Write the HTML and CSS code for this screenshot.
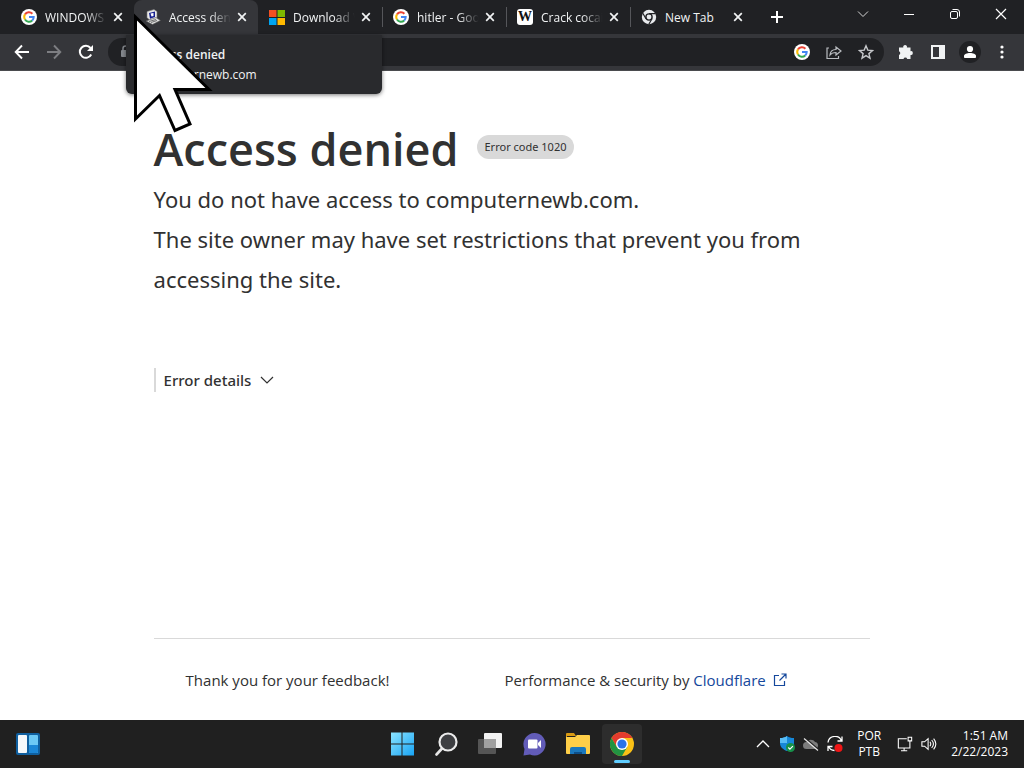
FILE: index.html
```html
<!DOCTYPE html>
<html lang="en">
<head>
<meta charset="utf-8">
<title>Access denied</title>
<link rel="stylesheet" href="styles.css">
</head>
<body>
<svg class="defs" width="0" height="0" aria-hidden="true">
  <symbol id="google" viewBox="0 0 16 16">
    <circle cx="8" cy="8" r="8" fill="#fff"/>
    <g fill="none" stroke-width="2">
      <path d="M4 5.400A4.700 4.700 0 0 1 11.400 4.700" stroke="#ea4335"/>
      <path d="M4 10.500A4.700 4.700 0 0 1 4 5.400" stroke="#fbbc05"/>
      <path d="M11.200 11.500A4.700 4.700 0 0 1 4 10.500" stroke="#34a853"/>
      <path d="M8 8H12.700A4.700 4.700 0 0 1 11.200 11.500" stroke="#4285f4"/>
    </g>
  </symbol>
  <symbol id="close" viewBox="0 0 16 16"><path d="M4.200 4.200l7.600 7.600M11.800 4.200l-7.600 7.600" stroke="#f1f3f4" stroke-width="1.700"/></symbol>
</svg>

<header class="browser">
  <div class="strip">
    <div class="tab">
      <svg class="icon"><use href="#google"/></svg>
      <span class="name">WINDOWS</span>
      <button class="close" aria-label="Close tab"><svg class="icon"><use href="#close"/></svg></button>
    </div>
    <div class="tab active">
      <svg class="icon" viewBox="0 0 16 16"><path d="M2 2.500L9 .5l3 2v6.500l-7 2.500-3-3z" fill="#e8e8e8" stroke="#777" stroke-width=".6"/><path d="M4 4l6-1.500v5.600L5 9.700z" fill="#172090"/><path d="M5.500 4.500l3-.5v3l-2 .5z" fill="#fff"/><path d="M1 12l10-3.500 4.500 3-8 4z" fill="#ddd" stroke="#555" stroke-width=".6"/><path d="M4 12.500l7-2M6 13.500l6-2" stroke="#444" stroke-width=".7"/></svg>
      <span class="name">Access den</span>
      <button class="close" aria-label="Close tab"><svg class="icon"><use href="#close"/></svg></button>
    </div>
    <div class="tab">
      <svg class="icon" viewBox="0 0 16 16"><path d="M0 1h7.500v7H0z" fill="#f25022"/><path d="M8.500 1H16v7H8.500z" fill="#7fba00"/><path d="M0 9h7.500v7H0z" fill="#00a4ef"/><path d="M8.500 9H16v7H8.500z" fill="#ffb900"/></svg>
      <span class="name">Download W</span>
      <button class="close" aria-label="Close tab"><svg class="icon"><use href="#close"/></svg></button>
    </div>
    <div class="tab lined">
      <svg class="icon"><use href="#google"/></svg>
      <span class="name">hitler - Goo</span>
      <button class="close" aria-label="Close tab"><svg class="icon"><use href="#close"/></svg></button>
    </div>
    <div class="tab lined">
      <span class="icon wiki">W</span>
      <span class="name">Crack cocai</span>
      <button class="close" aria-label="Close tab"><svg class="icon"><use href="#close"/></svg></button>
    </div>
    <div class="tab lined">
      <svg class="icon" viewBox="0 0 16 16"><circle cx="8" cy="8" r="7.200" fill="#e8eaed"/><circle cx="8" cy="8" r="3.800" fill="#202124"/><circle cx="8" cy="8" r="2.400" fill="#e8eaed"/><path d="M8 4.600h6.500M5 9.800L1.800 4.200M11 9.800L7.800 15.300" stroke="#202124" stroke-width="1.200"/></svg>
      <span class="name whole">New Tab</span>
      <button class="close" aria-label="Close tab"><svg class="icon"><use href="#close"/></svg></button>
    </div>
    <button class="plus" aria-label="New tab"><svg class="icon" viewBox="0 0 16 16"><path d="M8 2v12M2 8h12" stroke="#fff" stroke-width="2"/></svg></button>
    <div class="window">
      <button aria-label="Search tabs"><svg class="icon" viewBox="0 0 16 16" fill="none" stroke="#d5d5d5"><path d="M3 5.500l5 5 5-5"/></svg></button>
      <button aria-label="Minimize"><svg class="icon" viewBox="0 0 16 16"><path d="M3 8.500h10" stroke="#fff"/></svg></button>
      <button aria-label="Restore"><svg class="icon" viewBox="0 0 16 16" fill="none" stroke="#fff"><rect x="3.500" y="5.500" width="7" height="7" rx="1.500"/><path d="M5.500 3.500h4.500a2.500 2.500 0 0 1 2.500 2.500v4.500"/></svg></button>
      <button aria-label="Close"><svg class="icon" viewBox="0 0 16 16"><path d="M3 3l10 10M13 3L3 13" stroke="#fff" stroke-width="1.200"/></svg></button>
    </div>
  </div>

  <div class="toolbar">
    <button aria-label="Back"><svg class="icon" viewBox="0 0 16 16" fill="none" stroke="#fff" stroke-width="1.900"><path d="M15 8H2M8 1.500L1.700 8 8 14.500"/></svg></button>
    <button aria-label="Forward"><svg class="icon" viewBox="0 0 16 16" fill="none" stroke="#7d7e82" stroke-width="1.900"><path d="M1 8h13M8 1.500L14.300 8 8 14.500"/></svg></button>
    <button aria-label="Reload"><svg class="icon" viewBox="0 0 16 16" fill="none" stroke="#fff" stroke-width="2"><path d="M13.200 10.500A6 6 0 1 1 12.500 4"/><path d="M15 1v6H9z" fill="#fff" stroke="none"/></svg></button>
    <div class="address">
      <svg class="icon" viewBox="0 0 16 16"><rect x="5" y="6" width="9" height="7" rx="1" fill="#85898e"/><path d="M7 7V4.500a2.500 2.500 0 0 1 5 0V7" fill="none" stroke="#85898e" stroke-width="1.500"/></svg>
      <input type="text" aria-label="Address">
      <button aria-label="Google"><svg class="icon"><use href="#google"/></svg></button>
      <button aria-label="Share"><svg class="icon" viewBox="0 0 16 16" fill="none" stroke="#b9bcc0" stroke-width="1.200"><path d="M3 4H1v10.500h11.500V12"/><path d="M4 11c.3-4 2.500-5.500 6-5.500V3l5 4-5 4V8.500C7 8.500 5.500 9 4 11z"/></svg></button>
      <button aria-label="Bookmark"><svg class="icon" viewBox="0 0 16 16" fill="none" stroke="#c6c8cb" stroke-width="1.400"><path d="M8 1.800l1.800 4.300 4.700.4-3.600 3.100 1.100 4.600L8 11.700l-4 2.500 1.100-4.600-3.600-3.100 4.700-.4z"/></svg></button>
    </div>
    <div class="tools">
      <button aria-label="Extensions"><svg class="icon" viewBox="0 0 16 16" fill="#f1f3f4"><path d="M2 3.500h3.300a1.900 1.900 0 1 1 3.600 0h3.600v3.700a1.900 1.900 0 1 1 0 3.700v4H9.200a1.900 1.900 0 0 0-3.700 0H1v-4a1.900 1.900 0 0 0 0-3.600V3.500z"/></svg></button>
      <button aria-label="Side panel"><svg class="icon" viewBox="0 0 16 16"><path fill-rule="evenodd" d="M1 1h14v14H1zM3 3v10h6V3z" fill="#f1f3f4"/></svg></button>
      <button class="profile" aria-label="Profile"><svg class="icon" viewBox="0 0 16 16" fill="#fff"><circle cx="8" cy="5" r="3.100"/><path d="M2 14v-2c0-2 3-3 6-3s6 1 6 3v2z"/></svg></button>
      <button aria-label="Menu"><svg class="icon" viewBox="0 0 16 16" fill="#fff"><circle cx="8" cy="3" r="1.600"/><circle cx="8" cy="8" r="1.600"/><circle cx="8" cy="13" r="1.600"/></svg></button>
    </div>
  </div>

  <div class="tooltip" role="tooltip"><b>Access denied</b><span>computernewb.com</span></div>
  <svg class="pointer" viewBox="0 0 80 122" aria-hidden="true"><path d="M2.500 5V107L26.500 83.500 42 118.500 57 112 42 77.500H76z" fill="#fff" stroke="#000" stroke-width="3"/></svg>
</header>

<main class="page">
  <div class="heading"><h1>Access denied</h1><span class="badge">Error code 1020</span></div>
  <p class="lead">You do not have access to computernewb.com.<br>The site owner may have set restrictions that prevent you from accessing the site.</p>
  <button class="details">Error details <svg class="icon" viewBox="0 0 16 16" fill="none" stroke="#313131" stroke-width="1.200"><path d="M2 5l6 6 6-6"/></svg></button>
  <footer class="foot">
    <span>Thank you for your feedback!</span>
    <span>Performance &amp; security by <a href="#">Cloudflare <svg class="icon" viewBox="0 0 16 16" fill="none" stroke="#15489c" stroke-width="1.200"><path d="M7 3.500H2.500v10h10V9M9.500 2H14v4.500M14 2L7.500 8.500"/></svg></a></span>
  </footer>
</main>

<nav class="taskbar">
  <button class="widgets" aria-label="Widgets"><svg viewBox="0 0 24 24"><rect width="24" height="22" y="1" rx="2" fill="#0f5f9f"/><rect x="2" y="3" width="9" height="18" rx="1" fill="#f4f8fb"/><rect x="13" y="3" width="9" height="18" rx="1" fill="#6cc8f5"/><path d="M13 13h9v7a1 1 0 0 1-1 1h-7a1 1 0 0 1-1-1z" fill="#1b86d6"/></svg></button>
  <div class="apps">
    <button aria-label="Start"><svg viewBox="0 0 24 24"><defs><linearGradient id="win" x2="1" y2="1"><stop stop-color="#8be4ff"/><stop offset="1" stop-color="#18a4f5"/></linearGradient></defs><path d="M1 0.500h10.500v11H1zM12.500.5H24v11H12.500zM1 12.500h10.500v11H1zM12.500 12.500H24v11H12.500z" fill="url(#win)"/></svg></button>
    <button aria-label="Search"><svg viewBox="0 0 24 24"><path d="M8.500 16L2.500 22.500" stroke="#e6e6e6" stroke-width="2.600" stroke-linecap="round"/><circle cx="14" cy="10" r="8.500" fill="#3e3f42" stroke="#ececec" stroke-width="2.200"/></svg></button>
    <button aria-label="Task view"><svg viewBox="0 0 24 24"><rect x="6" y="1" width="18" height="15" rx="1" fill="#f2f2f2"/><rect x="0" y="7" width="18" height="15" rx="1" fill="#555"/><path d="M6 7h12v9H6z" fill="#a0a0a0"/></svg></button>
    <button aria-label="Chat"><svg viewBox="0 0 24 24"><path d="M12.500 1A11.200 11.200 0 1 1 8 22.500L1.500 23.500 2.500 17A11.200 11.200 0 0 1 12.500 1z" fill="#625cb8"/><rect x="6" y="7.500" width="9.500" height="9" rx="1" fill="#fff"/><path d="M16 11l3-3v8l-3-3z" fill="#fff"/></svg></button>
    <button aria-label="File Explorer"><svg viewBox="0 0 24 24"><path d="M0 2a1 1 0 0 1 1-1h7l2 3H1v3H0z" fill="#d99a13"/><path d="M0 5h9l2-2h12a1 1 0 0 1 1 1v17a1 1 0 0 1-1 1H1a1 1 0 0 1-1-1z" fill="#ffcf48"/><path d="M4 22v-5a2 2 0 0 1 2-2h12a2 2 0 0 1 2 2v5z" fill="#1b78bd"/><path d="M8 22v-2h8v2z" fill="#0d4f8a"/></svg></button>
    <button class="running" aria-label="Chrome"><svg viewBox="0 0 24 24"><circle cx="12" cy="12" r="12" fill="#fbc116"/><path d="M1.600 6A12 12 0 0 1 22.400 6H12L6.800 15z" fill="#e33b2e"/><path d="M1.600 6A12 12 0 0 0 12 24l5.200-9H6.800z" fill="#229342"/><circle cx="12" cy="12" r="6" fill="#fff"/><circle cx="12" cy="12" r="4.600" fill="#2a72e8"/></svg></button>
  </div>
  <div class="tray">
    <button aria-label="Hidden icons"><svg class="icon" viewBox="0 0 16 16" fill="none" stroke="#fff" stroke-width="1.300"><path d="M2 11l6-6 6 6"/></svg></button>
    <button aria-label="Security"><svg class="icon" viewBox="0 0 16 16"><path d="M8 0c2 1.500 4 2 7 2v5c0 4-3 6.500-7 8-4-1.500-7-4-7-8V2c3 0 5-.5 7-2z" fill="#1687d8"/><path d="M8 0v7H1V2c3 0 5-.5 7-2z" fill="#58bdf5"/><circle cx="11.500" cy="11.500" r="4.500" fill="#17914a"/><path d="M9.300 11.500l1.600 1.600 3-3" fill="none" stroke="#fff" stroke-width="1.200"/></svg></button>
    <button aria-label="OneDrive"><svg class="icon" viewBox="0 0 16 16"><path d="M3.500 13a3.500 3.500 0 0 1 0-7 5 5 0 0 1 8.500 0 3.600 3.600 0 0 1 .5 7z" fill="#7c7c7c"/><path d="M1.500 1.500l14 12" stroke="#202020" stroke-width="1.500"/><path d="M1 2.500l14 12" stroke="#e5e5e5" stroke-width="1.200"/></svg></button>
    <button aria-label="Update"><svg class="icon" viewBox="0 0 16 16" fill="none" stroke="#fff" stroke-width="1.300"><path d="M1 6.500A7 7 0 0 1 14.500 5M15 .5V5h-4.500M1 15v-4.500h4.500M1.500 10.500a7 7 0 0 0 6 4"/><circle cx="11.500" cy="12" r="4" fill="#f01515" stroke="none"/></svg></button>
    <span class="lang">POR<br>PTB</span>
    <button aria-label="Network"><svg viewBox="0 0 18 18" fill="none" stroke="#fff" stroke-width="1.200"><path d="M11 3H1.500v10.500h13V9M8 13.500V16.500M4.500 16.500h7"/><path d="M12.500 1.500h4v4h-4zM14.500 5.500V9"/></svg></button>
    <button aria-label="Volume"><svg viewBox="0 0 18 18" fill="none" stroke="#fff" stroke-width="1.200"><path d="M1 6.500h3l4-3.500v12l-4-3.500H1zM10 6.500q2 2.500 0 5M12 4.500q4 4.500 0 9M14.200 3q5 6 0 12"/></svg></button>
    <span class="clock">1:51 AM<br>2/22/2023</span>
  </div>
</nav>
</body>
</html>
```

FILE: styles.css
```css
* { box-sizing: border-box; }
body {
  margin: 0;
  min-height: 100vh;
  display: flex;
  flex-direction: column;
  background: #fff;
  color: #313131;
  font-family: "Segoe UI", "Open Sans", "Noto Sans", sans-serif;
}
button {
  border: 0;
  padding: 0;
  background: none;
  color: inherit;
  font: inherit;
  display: flex;
  align-items: center;
  justify-content: center;
}
.defs { position: absolute; }
.icon { width: 16px; height: 16px; flex: none; }

.browser { position: relative; background: #202124; color: #f1f3f4; font-size: 12px; }
.strip { display: flex; height: 34px; padding-left: 10px; }
.tab {
  display: flex;
  align-items: center;
  gap: 8px;
  flex: 0 1 124px;
  min-width: 0;
  padding: 0 8px 0 10px;
  border-left: 1px solid transparent;
}
.tab.active { background: #35363a; border-radius: 8px 8px 0 0; }
.tab.lined { border-image: linear-gradient(transparent 8px, #55565a 8px, #55565a 26px, transparent 26px) 1; }
.name {
  flex: 1;
  min-width: 0;
  margin-right: -6px;
  overflow: hidden;
  white-space: nowrap;
  mask-image: linear-gradient(90deg, #000 65%, transparent 98%);
}
.name.whole { mask-image: none; }
.wiki {
  background: #fff;
  border-radius: 3px;
  color: #111;
  font: bold 14px/16px "Liberation Serif", serif;
  text-align: center;
}
.plus { width: 46px; }
.window { display: flex; margin-left: auto; height: 28px; }
.window button { width: 46px; }

.toolbar {
  display: flex;
  align-items: center;
  gap: 16px;
  height: 37px;
  padding: 0 14px;
  background: #35363a;
  border-bottom: 1px solid #4a4b4e;
}
.address {
  flex: 1;
  display: flex;
  align-items: center;
  gap: 16px;
  height: 28px;
  padding: 0 10px 0 8px;
  margin-left: -2px;
  border-radius: 14px;
  background: #202124;
}
.address input { flex: 1; min-width: 0; border: 0; background: none; color: inherit; }
.tools { display: flex; gap: 16px; margin-left: -2px; }
.profile svg { border-radius: 50%; box-shadow: 0 0 0 3px #202124; background: #202124; }

.tooltip {
  position: absolute;
  left: 126px;
  top: 35px;
  width: 256px;
  height: 59px;
  padding: 10px 8px 0 18px;
  border-radius: 0 0 6px 6px;
  background: #292a2d;
  box-shadow: 0 1px 4px #0008;
  line-height: 20px;
}
.tooltip b, .tooltip span { display: block; }
.tooltip b { font-weight: 600; }
.pointer { position: absolute; left: 133px; top: 12px; width: 80px; height: 122px; }

.page { flex: 1; width: 70%; margin: 0 auto; display: flex; flex-direction: column; padding-top: 48px; }
.heading { display: flex; align-items: flex-start; gap: 18px; }
h1 { margin: 0; font-size: 45px; line-height: 60px; font-weight: 600; white-space: nowrap; }
.badge {
  margin-top: 16px;
  padding: 0 8px;
  border-radius: 12px;
  background: #d9d9d9;
  font-family: "Segoe UI", "Noto Sans", sans-serif;
  font-size: 11px;
  line-height: 24px;
  white-space: nowrap;
}
.lead {
  margin: 0;
  font-family: "Segoe UI", "Noto Sans", sans-serif;
  font-size: 22px;
  line-height: 40px;
}
.details {
  align-self: flex-start;
  gap: 8px;
  margin-top: 69px;
  padding-left: 8px;
  border-left: 2px solid #d9d9d9;
  font-family: "Segoe UI", "Noto Sans", sans-serif;
  font-size: 15px;
  line-height: 24px;
  font-weight: 500;
}
.foot {
  display: grid;
  grid-template-columns: 319px 1fr;
  margin-top: auto;
  padding: 28px 0 27px 32px;
  border-top: 1px solid #d9d9d9;
  font-size: 15px;
  line-height: 26px;
}
.foot a { color: #15489c; text-decoration: none; }
.foot .icon { vertical-align: -2px; margin-left: 2px; }

.taskbar {
  display: grid;
  grid-template-columns: 1fr auto 1fr;
  align-items: center;
  height: 48px;
  padding: 0 16px;
  background: #202020;
  color: #fff;
  font-size: 12px;
}
.taskbar svg { width: 24px; height: 24px; }
.widgets { justify-self: start; }
.apps { display: flex; gap: 4px; }
.apps button { width: 40px; height: 40px; }
.running { background: #2d2d2d; border-radius: 4px; position: relative; }
.running::after { content: ""; position: absolute; bottom: 1px; left: 12px; width: 16px; height: 3px; border-radius: 2px; background: #60cdff; }
.tray { display: flex; align-items: center; justify-content: flex-end; gap: 8px; line-height: 16px; }
.taskbar .tray svg { width: 16px; height: 16px; }
.lang { text-align: center; margin: 0 8px 0 6px; }
.clock { text-align: right; margin-left: 6px; }
```
